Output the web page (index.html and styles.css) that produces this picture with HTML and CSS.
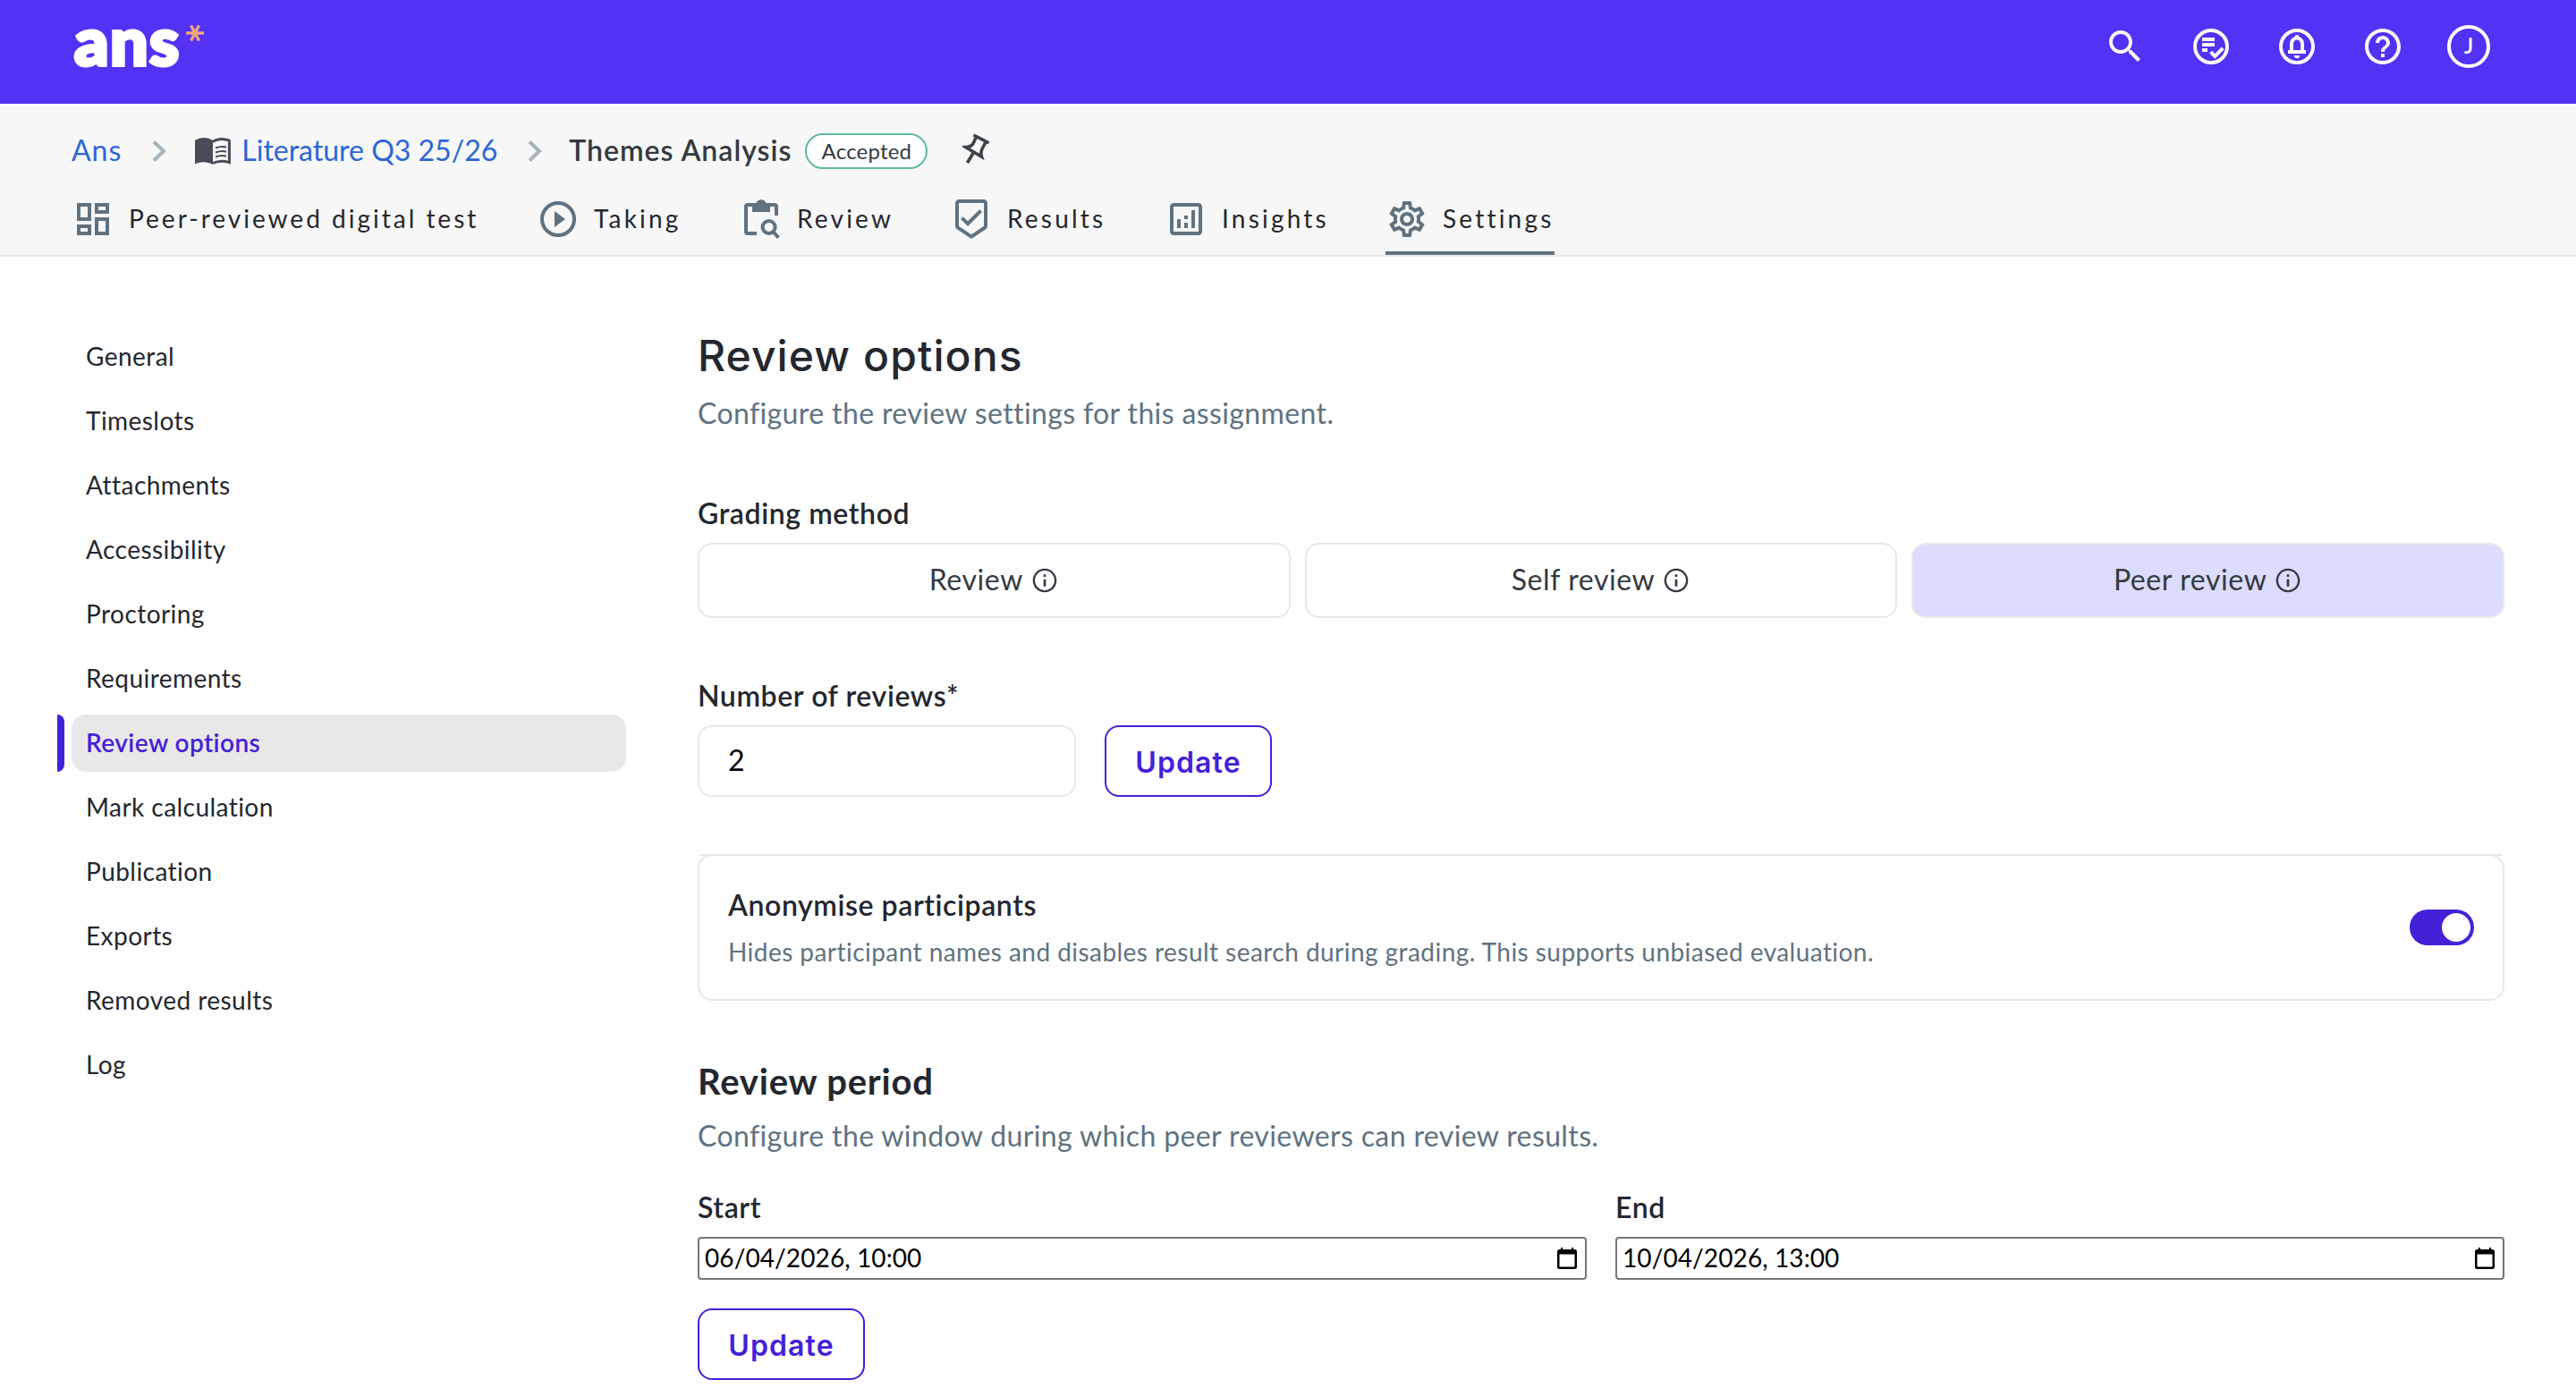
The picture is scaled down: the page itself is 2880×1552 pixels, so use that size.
FILE: index.html
```
<!DOCTYPE html>
<html lang="en">
<head>
    <meta charset="UTF-8">
    <meta name="viewport" content="width=device-width, initial-scale=1.0">
    <title>Review options - Ans</title>
    <link rel="stylesheet" href="styles.css">
</head>
<body>
    <header class="topbar">
        <a class="logo" href="#">
            <span>ans</span>
            <svg class="logo-star" viewBox="0 0 20 20"><path d="M0 10h20M5.500 1.500l9 17M14.500 1.500l-9 17"/></svg>
        </a>
        <div class="topbar-actions">
            <svg class="icon" viewBox="0 0 24 24"><path d="M15.5 14h-.79l-.28-.27C15.41 12.59 16 11.11 16 9.5 16 5.91 13.09 3 9.5 3S3 5.91 3 9.5 5.91 16 9.5 16c1.61 0 3.09-.59 4.23-1.57l.27.28v.79l5 4.99L20.49 19l-4.99-5zm-6 0C7.01 14 5 11.99 5 9.5S7.01 5 9.5 5 14 7.01 14 9.5 11.99 14 9.5 14z"/></svg>
            <svg class="icon" viewBox="0 0 24 24">
                <circle class="line" cx="12" cy="12" r="9"/>
                <path d="M7 7h7v2H7zM7 10h7v2H7zM7 13h3v2H7z"/>
                <path class="line" d="M11.8 15.1l2.4 2.4 4.4-4.6"/>
            </svg>
            <svg class="icon" viewBox="0 0 24 24">
                <circle class="line" cx="12" cy="12" r="9"/>
                <path d="M7 14h10v2H7zM10.3 17h3.4c0 .9-.8 1.6-1.7 1.6s-1.7-.7-1.7-1.6z"/>
                <path d="M11 5.6h2v2h-2z"/>
                <path class="line" d="M9 15v-4.5a3 3.3 0 0 1 6 0V15"/>
            </svg>
            <svg class="icon" viewBox="0 0 24 24"><path d="M11 18h2v-2h-2v2zm1-16C6.48 2 2 6.48 2 12s4.48 10 10 10 10-4.48 10-10S17.52 2 12 2zm0 18c-4.41 0-8-3.59-8-8s3.59-8 8-8 8 3.59 8 8-3.59 8-8 8zm0-14c-2.21 0-4 1.79-4 4h2c0-1.1.9-2 2-2s2 .9 2 2c0 2-3 1.75-3 5h2c0-2.25 3-2.5 3-5 0-2.21-1.79-4-4-4z"/></svg>
            <div class="avatar">J</div>
        </div>
    </header>

    <div class="subnav">
        <div class="breadcrumb">
            <a class="home" href="#">Ans</a>
            <svg class="chevron" viewBox="0 0 16 24"><path d="M2 1.5L13 12 2 22.5"/></svg>
            <svg class="book" viewBox="0 0 40 30">
                <path d="M0 3C6-1 14-1 20 3v27C14 26.500 6 26.500 0 29.500z"/>
                <path class="page" d="M20 4.200C26 .5 32 .8 38.400 3.200V27.600C32 25.500 26 25.500 20 28.500"/>
                <path class="page thin" d="M23 11.500c4-1.700 8-1.900 12-1M23 16.500c4-1.700 8-1.900 12-1M23 21.500c4-1.700 8-1.900 12-1"/>
            </svg>
            <a href="#">Literature Q3 25/26</a>
            <svg class="chevron" viewBox="0 0 16 24"><path d="M2 1.5L13 12 2 22.5"/></svg>
            <span class="current">Themes Analysis</span>
            <span class="badge">Accepted</span>
            <svg class="pin" viewBox="0 0 32 36"><path d="M12.500 4L29.500 12.800M15.500 6L12 13.500Q9.500 17.500 3.500 17.500L21.500 28.200Q20 23.500 22 19.500L26 12M12.500 23.500L5.500 35"/></svg>
        </div>
        <nav class="tabs">
            <a class="tab tab-overview" href="#">
                <svg class="icon" viewBox="0 0 24 24"><path d="M19 5v2h-4V5h4M9 5v6H5V5h4m10 8v6h-4v-6h4M9 17v2H5v-2h4M21 3h-8v6h8V3zM11 3H3v10h8V3zm10 8h-8v10h8V11zm-10 4H3v6h8v-6z"/></svg>
                <span>Peer-reviewed digital test</span>
            </a>
            <a class="tab tab-taking" href="#">
                <svg class="icon" viewBox="0 0 24 24"><circle class="line" cx="12" cy="12" r="9"/><path d="M10 16.500l6-4.500-6-4.500z"/></svg>
                <span>Taking</span>
            </a>
            <a class="tab tab-review" href="#">
                <svg class="icon" viewBox="0 0 24 24">
                    <path class="line" d="M9.500 20H4.500a1 1 0 0 1-1-1V5a1 1 0 0 1 1-1h15a1 1 0 0 1 1 1v5"/>
                    <path fill-rule="evenodd" d="M7 3h2.200a3 3 0 0 1 5.600 0H17v5H7zM12 3a1 1 0 1 0 0 2 1 1 0 0 0 0-2z"/>
                    <circle class="line" cx="16.300" cy="16.500" r="3.500"/>
                    <path class="line" d="M18.600 19l3.100 3.300"/>
                </svg>
                <span>Review</span>
            </a>
            <a class="tab tab-results" href="#">
                <svg class="icon" viewBox="0 0 24 24"><path d="M19 1H5c-1.100 0-1.990.9-1.990 2L3 15.930c0 .690.350 1.300.880 1.660L12 23l8.110-5.410c.530-.360.880-.970.880-1.660L21 3c0-1.100-.9-2-2-2zm-7 19.600l-7-4.660V3h14v12.930l-7 4.670zm-2.010-7.420l-2.580-2.590L6 12l4 4 8-8-1.420-1.420z"/></svg>
                <span>Results</span>
            </a>
            <a class="tab tab-insights" href="#">
                <svg class="icon" viewBox="0 0 24 24"><path d="M19 3H5c-1.100 0-2 .9-2 2v14c0 1.100.9 2 2 2h14c1.100 0 2-.9 2-2V5c0-1.100-.9-2-2-2zm0 16H5V5h14v14zM7 12h2v5H7zM15 7h2v10h-2zM11 14h2v3h-2zM11 10h2v2h-2z"/></svg>
                <span>Insights</span>
            </a>
            <a class="tab tab-settings active" href="#">
                <svg class="icon" viewBox="0 0 24 24"><path d="M19.43 12.98c.04-.32.07-.64.07-.98 0-.34-.03-.66-.07-.98l2.11-1.65c.19-.15.24-.42.12-.64l-2-3.46c-.09-.16-.26-.25-.44-.25-.06 0-.12.01-.17.03l-2.49 1c-.52-.4-1.08-.73-1.69-.98l-.38-2.65C14.46 2.18 14.25 2 14 2h-4c-.25 0-.46.18-.49.42l-.38 2.65c-.61.25-1.17.59-1.69.98l-2.49-1c-.06-.02-.12-.03-.18-.03-.17 0-.34.09-.43.25l-2 3.46c-.13.22-.07.49.12.64l2.11 1.65c-.04.32-.07.65-.07.98 0 .33.03.66.07.98l-2.11 1.65c-.19.15-.24.42-.12.64l2 3.46c.09.16.26.25.44.25.06 0 .12-.01.17-.03l2.49-1c.52.4 1.08.73 1.69.98l.38 2.65c.03.24.24.42.49.42h4c.25 0 .46-.18.49-.42l.38-2.65c.61-.25 1.17-.59 1.69-.98l2.49 1c.06.02.12.03.18.03.17 0 .34-.09.43-.25l2-3.46c.12-.22.07-.49-.12-.64l-2.11-1.65zm-1.98-1.71c.04.31.05.52.05.73 0 .21-.02.43-.05.73l-.14 1.13.89.7 1.08.84-.7 1.21-1.27-.51-1.04-.42-.9.68c-.43.32-.84.56-1.25.73l-1.06.43-.16 1.13-.2 1.35h-1.4l-.19-1.35-.16-1.13-1.06-.43c-.43-.18-.83-.41-1.23-.71l-.91-.7-1.06.43-1.27.51-.7-1.21 1.08-.84.89-.7-.14-1.13c-.03-.31-.05-.54-.05-.74s.02-.43.05-.73l.14-1.13-.89-.7-1.08-.84.7-1.21 1.27.51 1.04.42.9-.68c.43-.32.84-.56 1.25-.73l1.06-.43.16-1.13.2-1.35h1.39l.19 1.35.16 1.13 1.06.43c.43.18.83.41 1.23.71l.91.7 1.06-.43 1.27-.51.7 1.21-1.07.85-.89.7.14 1.13zM12 8c-2.21 0-4 1.79-4 4s1.79 4 4 4 4-1.79 4-4-1.79-4-4-4zm0 6c-1.1 0-2-.9-2-2s.9-2 2-2 2 .9 2 2-.9 2-2 2z"/></svg>
                <span>Settings</span>
            </a>
        </nav>
    </div>

    <div class="container">
        <aside class="sidebar">
            <a href="#">General</a>
            <a href="#">Timeslots</a>
            <a href="#">Attachments</a>
            <a href="#">Accessibility</a>
            <a href="#">Proctoring</a>
            <a href="#">Requirements</a>
            <a class="active" href="#">Review options</a>
            <a href="#">Mark calculation</a>
            <a href="#">Publication</a>
            <a href="#">Exports</a>
            <a href="#">Removed results</a>
            <a href="#">Log</a>
        </aside>

        <main class="main">
            <h1>Review options</h1>
            <p class="subtitle">Configure the review settings for this assignment.</p>

            <div class="label label-first">Grading method</div>
            <div class="methods">
                <button class="method">Review <svg class="info" viewBox="0 0 24 24"><path d="M11 7h2v2h-2zM11 11h2v6h-2zM12 2C6.480 2 2 6.480 2 12s4.480 10 10 10 10-4.480 10-10S17.520 2 12 2zm0 18.200c-4.520 0-8.200-3.680-8.200-8.200S7.480 3.800 12 3.800s8.200 3.680 8.200 8.200-3.680 8.200-8.200 8.200z"/></svg></button>
                <button class="method">Self review <svg class="info" viewBox="0 0 24 24"><path d="M11 7h2v2h-2zM11 11h2v6h-2zM12 2C6.480 2 2 6.480 2 12s4.480 10 10 10 10-4.480 10-10S17.520 2 12 2zm0 18.200c-4.520 0-8.200-3.680-8.200-8.200S7.480 3.800 12 3.800s8.200 3.680 8.200 8.200-3.680 8.200-8.200 8.200z"/></svg></button>
                <button class="method selected">Peer review <svg class="info" viewBox="0 0 24 24"><path d="M11 7h2v2h-2zM11 11h2v6h-2zM12 2C6.480 2 2 6.480 2 12s4.480 10 10 10 10-4.480 10-10S17.520 2 12 2zm0 18.200c-4.520 0-8.200-3.680-8.200-8.200S7.480 3.800 12 3.800s8.200 3.680 8.200 8.200-3.680 8.200-8.200 8.200z"/></svg></button>
            </div>

            <label class="label label-reviews" for="reviews">Number of reviews*</label>
            <div class="reviews-row">
                <input type="text" id="reviews" name="reviews" value="2">
                <button class="btn">Update</button>
            </div>

            <section class="card">
                <div>
                    <div class="card-title">Anonymise participants</div>
                    <p class="card-text">Hides participant names and disables result search during grading. This supports unbiased evaluation.</p>
                </div>
                <div class="toggle"></div>
            </section>

            <h2>Review period</h2>
            <p class="subtitle period-text">Configure the window during which peer reviewers can review results.</p>

            <div class="dates">
                <div>
                    <div class="label">Start</div>
                    <div class="date-input">
                        <span>06/04/2026, 10:00</span>
                        <svg class="calendar" viewBox="0 0 22 24"><path fill-rule="evenodd" d="M4 0h2v2h10V0h2v2h1.500A2.500 2.500 0 0 1 22 4.500v17a2.500 2.500 0 0 1-2.500 2.500h-17A2.500 2.500 0 0 1 0 21.500v-17A2.500 2.500 0 0 1 2.500 2H4zM2.500 7.500v14h17v-14z"/></svg>
                    </div>
                </div>
                <div>
                    <div class="label">End</div>
                    <div class="date-input">
                        <span>10/04/2026, 13:00</span>
                        <svg class="calendar" viewBox="0 0 22 24"><path fill-rule="evenodd" d="M4 0h2v2h10V0h2v2h1.500A2.500 2.500 0 0 1 22 4.500v17a2.500 2.500 0 0 1-2.500 2.500h-17A2.500 2.500 0 0 1 0 21.500v-17A2.500 2.500 0 0 1 2.500 2H4zM2.500 7.500v14h17v-14z"/></svg>
                    </div>
                </div>
            </div>
            <button class="btn">Update</button>
        </main>
    </div>
</body>
</html>
```
FILE: styles.css
```
* {
    box-sizing: border-box;
}
body {
    font-family: Lato, sans-serif;
    background-color: #fefefe;
    color: #24272e;
    margin: 0;
    padding: 0;
    overflow: hidden;
}
a {
    text-decoration: none;
    color: inherit;
}
button, input {
    font-family: inherit;
    margin: 0;
}
.icon {
    width: 48px;
    height: 48px;
    flex: none;
    fill: currentColor;
}
.line {
    fill: none;
    stroke: currentColor;
    stroke-width: 2;
}

/* Top bar */
.topbar {
    height: 116px;
    padding: 0 96px 12px 83px;
    background: #5331f5;
    display: flex;
    justify-content: space-between;
    align-items: center;
    color: #f7f7f7;
}
.logo {
    display: flex;
    color: #fff;
    font-size: 75px;
    font-weight: 900;
    line-height: 64px;
    height: 80px;
    letter-spacing: 1.5px;
    -webkit-text-stroke: 4px #fff;
}
.logo-star {
    width: 20px;
    height: 20px;
    margin: 15px 0 0 6px;
    fill: none;
    stroke: #eda77c;
    stroke-width: 3.4;
}
.topbar-actions {
    display: flex;
    gap: 48px;
}
.avatar {
    width: 48px;
    height: 48px;
    border: 4px solid #fff;
    border-radius: 50%;
    color: #fff;
    font-size: 24px;
    font-weight: 600;
    line-height: 38px;
    text-align: center;
}

/* Breadcrumb and tabs */
.subnav {
    height: 171px;
    padding: 33px 80px 0;
    background: #f7f7f7;
    border-bottom: 2px solid #e8e8e8;
}
.breadcrumb {
    display: flex;
    align-items: center;
    height: 40px;
    font-size: 32px;
    white-space: nowrap;
}
.breadcrumb a, .current {
    padding-bottom: 4px;
}
.breadcrumb a {
    color: #2b66d3;
}
.breadcrumb .home {
    letter-spacing: 1px;
}
.chevron {
    width: 16px;
    height: 24px;
    margin: 0 32px 0 34px;
    fill: none;
    stroke: #a6b4bc;
    stroke-width: 4;
}
.book {
    width: 40px;
    height: 30px;
    margin-right: 12px;
    fill: #474c57;
}
.page {
    fill: none;
    stroke: #474c57;
    stroke-width: 3;
}
.page.thin {
    stroke-width: 2;
}
.current {
    color: #343a40;
    font-weight: 600;
    letter-spacing: 1px;
    margin-left: -2px;
}
.badge {
    width: 137px;
    height: 40px;
    margin-left: 15px;
    border: 2px solid #60ba98;
    border-radius: 20px;
    background: #fff;
    color: #343a40;
    font-size: 24px;
    letter-spacing: 0.2px;
    line-height: 35px;
    text-align: center;
}
.pin {
    width: 32px;
    height: 36px;
    margin: 0 0 8px 39px;
    fill: none;
    stroke: #3d434b;
    stroke-width: 3.6;
}
.tabs {
    display: flex;
    gap: 64px;
    height: 80px;
    margin-top: 16px;
    font-size: 28px;
    letter-spacing: 3.2px;
    white-space: nowrap;
}
.tab {
    display: flex;
    align-items: center;
    gap: 16px;
}
.tab .icon {
    color: #607280;
}
.tab span {
    padding-bottom: 3px;
}
.tab-overview {
    width: 456px;
    letter-spacing: 3px;
}
.tab-taking {
    width: 163px;
}
.tab-review {
    width: 171px;
}
.tab-results {
    width: 176px;
}
.tab-insights {
    width: 183px;
}
.tab-settings {
    width: 189px;
}
.tab.active {
    box-shadow: inset 0 -4px #607280;
}

/* Page */
.container {
    display: flex;
    gap: 80px;
    padding: 80px 80px 0;
}
.sidebar {
    width: 620px;
    flex: none;
    display: flex;
    flex-direction: column;
    gap: 8px;
}
.sidebar a {
    position: relative;
    height: 64px;
    padding: 0 16px;
    border-radius: 16px;
    font-size: 28px;
    letter-spacing: 0.45px;
    line-height: 62px;
}
.sidebar .active {
    background: #e8e8e8;
    color: #4420d9;
    font-weight: 600;
}
.sidebar .active::before {
    content: "";
    position: absolute;
    left: -16px;
    top: 0;
    width: 8px;
    height: 64px;
    border-radius: 0 8px 8px 0;
    background: #4420d9;
}
.main {
    flex: 1;
}
h1 {
    margin: 0;
    font-family: Inter, sans-serif;
    font-size: 48px;
    font-weight: 500;
    letter-spacing: 1.1px;
    line-height: 62px;
}
.subtitle {
    margin: 9px 0 0;
    color: #607280;
    font-size: 32px;
    letter-spacing: 0.38px;
    line-height: 48px;
}
.label {
    display: block;
    margin-bottom: 9px;
    font-size: 32px;
    font-weight: 600;
    letter-spacing: 0.6px;
    line-height: 48px;
}
.label-first {
    margin-top: 64px;
}
.label-reviews {
    margin-top: 63px;
}
.methods {
    display: grid;
    grid-template-columns: repeat(3, 1fr);
    gap: 16px;
}
.method {
    display: flex;
    justify-content: center;
    align-items: center;
    gap: 8px;
    height: 84px;
    padding: 0 0 3px;
    border: 2px solid #e8e8e8;
    border-radius: 16px;
    background: #fff;
    color: #343a40;
    font-size: 32px;
    letter-spacing: 0.6px;
}
.method.selected {
    background: #dbdcfe;
}
.info {
    width: 32px;
    height: 32px;
    margin-top: 3px;
    fill: #343a40;
}
.reviews-row {
    display: flex;
    gap: 32px;
}
.reviews-row input {
    width: 423px;
    height: 80px;
    padding: 0 32px 3px;
    border: 2px solid #e8e8e8;
    border-radius: 16px;
    background: #fff;
    color: #000;
    font-size: 32px;
}
.btn {
    width: 187px;
    height: 80px;
    padding: 2px 0 0;
    border: 2px solid #4420d9;
    border-radius: 16px;
    background: #fff;
    color: #4420d9;
    font-family: Inter, sans-serif;
    font-size: 32px;
    font-weight: 600;
    letter-spacing: 1.1px;
}
.card {
    position: relative;
    display: flex;
    justify-content: space-between;
    align-items: center;
    height: 164px;
    margin-top: 64px;
    padding: 0 32px 3px;
    border: 2px solid #e8e8e8;
    border-radius: 16px;
}
.card::before {
    content: "";
    position: absolute;
    left: 0;
    right: 0;
    top: -2px;
    height: 2px;
    background: #e8e8e8;
}
.card-title {
    font-size: 32px;
    font-weight: 600;
    letter-spacing: 0.58px;
    line-height: 48px;
}
.card-text {
    margin: 8px 0 0;
    color: #607280;
    font-size: 28px;
    letter-spacing: 0.45px;
    line-height: 40px;
}
.toggle {
    width: 72px;
    height: 40px;
    margin-top: 3px;
    padding: 4px;
    border-radius: 20px;
    background: #4420d9;
}
.toggle::after {
    content: "";
    display: block;
    width: 32px;
    height: 32px;
    margin-left: auto;
    border-radius: 50%;
    background: #fff;
}
h2 {
    margin: 62px 0 0;
    font-size: 40px;
    font-weight: 700;
    letter-spacing: 0.8px;
    line-height: 56px;
}
.period-text {
    margin-top: 9px;
}
.dates {
    display: grid;
    grid-template-columns: 1fr 1fr;
    gap: 32px;
    margin: 32px 0;
}
.date-input {
    display: flex;
    justify-content: space-between;
    align-items: center;
    height: 48px;
    padding: 0 9px 0 6px;
    border: 2px solid #767676;
    border-radius: 4px;
    background: #fff;
    color: #000;
    font-size: 28px;
    letter-spacing: 0.1px;
}
.date-input span {
    padding-bottom: 3px;
}
.calendar {
    width: 22px;
    height: 24px;
    fill: #000;
}
```
